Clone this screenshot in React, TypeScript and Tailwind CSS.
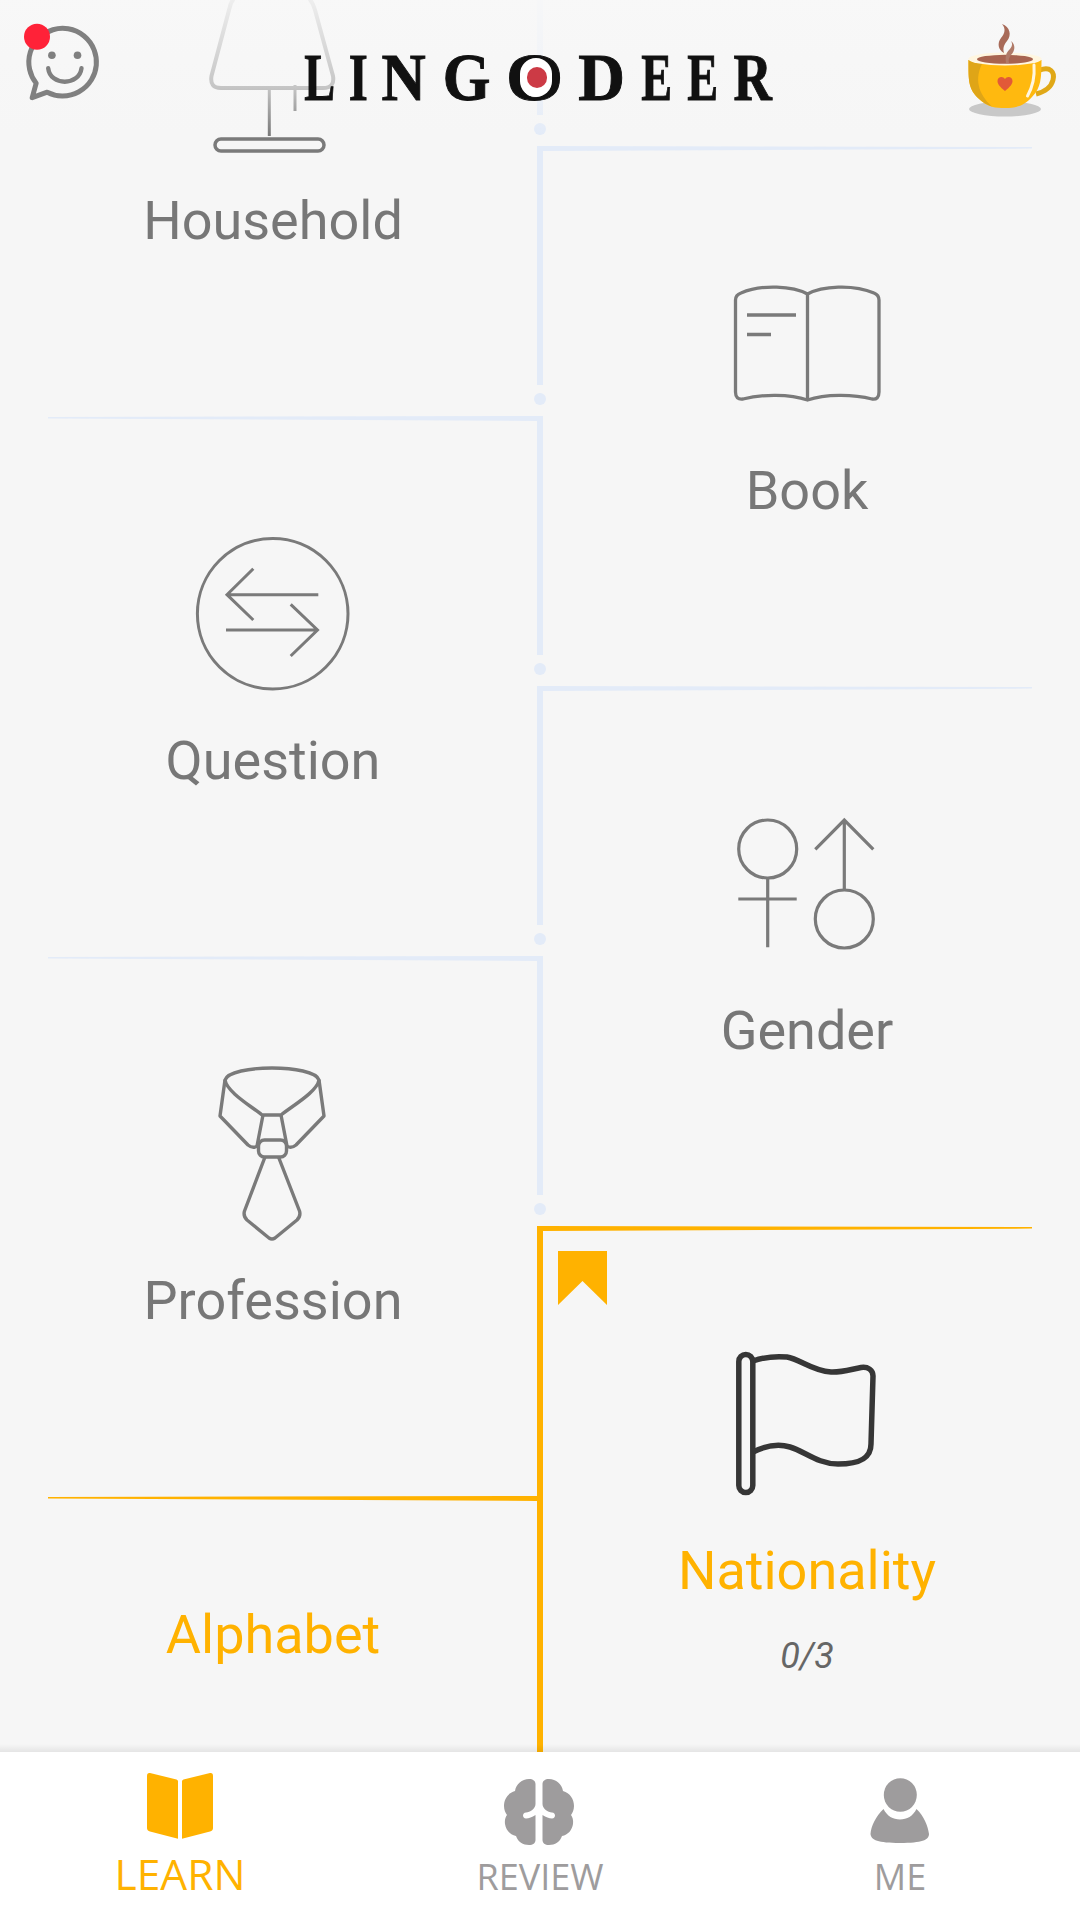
import type { ReactNode } from "react";

const roboto = "[font-family:Roboto,sans-serif]";

function Lamp() {
  return (
    <svg viewBox="193 -7 160 160" className="h-[160px] w-[160px]" fill="none" stroke="#7a7a7a">
      <path strokeWidth="4" d="M238 -5Q231 -1 229 10L211.5 76Q209.5 88 221 88H323Q335 88 333 76L315 10Q312 -1 304 -6" />
      <path strokeWidth="3" d="M269.3 88V136M295 85V111" />
      <rect x="215" y="139" width="109" height="12" rx="6" strokeWidth="3.5" />
    </svg>
  );
}

function BookIcon() {
  return (
    <svg viewBox="-3 3 240 160" className="h-[160px] w-[240px]" fill="none" stroke="#7a7a7a" strokeWidth="3.3">
      <path d="M117.5 34C103 26 72 24 51 33Q45.5 35 45.5 40V132Q45.5 140 53 139C72 134 100 134 117.5 140C135 134 163 134 182 139Q189 140 189 132V40Q189 35 184 33C163 24 132 26 117.5 34Z" />
      <path d="M117.5 34V140M57 55H106M57 74.5H81" />
    </svg>
  );
}

function QuestionIcon() {
  return (
    <svg viewBox="3 3 200 200" className="h-[200px] w-[200px]" fill="none" stroke="#7a7a7a" strokeWidth="3">
      <circle cx="102.7" cy="103.7" r="75.3" />
      <path d="M148.3 84.7H57M83.3 58.7L57 84.7L83.3 110M56 120H147.5M120.7 94.3L147.5 120L120.7 146" />
    </svg>
  );
}

function GenderIcon() {
  return (
    <svg viewBox="7 3 200 180" className="h-[180px] w-[200px]" fill="none" stroke="#7a7a7a" strokeWidth="3.2">
      <circle cx="67.7" cy="59" r="29" />
      <path d="M67.7 88V157.3M38.3 109H96.7" />
      <circle cx="144.3" cy="129" r="29" />
      <path d="M144.3 100V30M115.3 59.3L144.3 30L173.3 59.3" />
    </svg>
  );
}

function TieIcon() {
  return (
    <svg viewBox="-2 3 170 200" className="h-[200px] w-[170px]" fill="none" stroke="#7a7a7a" strokeWidth="3.4" strokeLinejoin="round">
      <path d="M35 30C40 14 124 14 129 30C127 42 102 56 91 65H72C61 56 37 42 35 30Z" />
      <path d="M35 30L30 66L58 95Q63 99 67 96L73 65M129 30L134 66L106 95Q101 99 97 96L91 65" />
      <rect x="68.5" y="90" width="28" height="17" rx="6" />
      <path d="M75 107L54.5 161Q53 166 57 170L79 188Q82 190 85 188L107 170Q111 166 109.5 161L88.5 107" />
    </svg>
  );
}

function FlagIcon() {
  return (
    <svg viewBox="207 143 160 160" className="h-[160px] w-[160px]" fill="none" stroke="#363636" strokeWidth="5.5">
      <rect x="218.8" y="154.5" width="14" height="138" rx="7" />
      <path d="M233 161C243 157.5 256 156 267 157C280 159 292 171 311 172C322 172.5 332 169 341 167.5C348 166.5 353 170 353 176L351 244C351 258 340 264 318 264C298 264 284 251 270 247C257 243 243 247 233 252" />
    </svg>
  );
}

function Rule({ side, active }: { side: "left" | "right"; active: boolean }) {
  const points = side === "left" ? "0,2.6 0,1 489,0 489,5" : "0,0 0,5 489,2.6 489,1";
  return (
    <svg
      viewBox="0 0 489 5"
      preserveAspectRatio="none"
      className={
        side === "left"
          ? "ml-[48px] block h-[5px] w-[489px] shrink-0"
          : "block h-[5px] w-[489px] shrink-0"
      }
    >
      <polygon points={points} fill={active ? "#ffb200" : "#e3ebf8"} />
    </svg>
  );
}

function Lesson({
  side,
  label,
  active = false,
  icon,
  progress,
}: {
  side: "left" | "right";
  label: string;
  active?: boolean;
  icon?: ReactNode;
  progress?: string;
}) {
  return (
    <section className="relative flex h-[540px] shrink-0 flex-col">
      <Rule side={side} active={active} />
      {active && icon && (
        <svg viewBox="0 0 49 54" className="absolute left-[15px] top-[25px] h-[54px] w-[49px]">
          <polygon points="0,0 49,0 49,54 24.5,30 0,54" fill="#ffb200" />
        </svg>
      )}
      <div className={side === "left" ? "flex flex-col items-center pl-[9px]" : "flex flex-col items-center pr-[9px]"}>
        {icon ? (
          <div className="flex h-[308px] items-center justify-center pt-[76px]">{icon}</div>
        ) : (
          <div className="h-[102px]" />
        )}
        <div className={`${roboto} text-[54px] leading-[64px] ${active ? "text-[#ffb200]" : "text-[#777777]"}`}>
          {label}
        </div>
        {progress && (
          <div className={`${roboto} mt-[31px] text-[36px] italic leading-[44px] text-[#666666]`}>{progress}</div>
        )}
      </div>
    </section>
  );
}

function Spine() {
  const segments = [0, 1, 2, 3, 4];
  return (
    <div className="-mt-[124px] flex flex-col items-center">
      {segments.map((n) => (
        <div key={n} className="flex h-[270px] w-[6px] shrink-0 flex-col items-center">
          <div className="h-[239px] w-[6px] bg-[#e3ebf8]" />
          <div className="mt-[8px] h-[12px] w-[12px] shrink-0 rounded-full bg-[#e3ebf8]" />
        </div>
      ))}
      <div className="w-[6px] flex-1 bg-[#ffb200]" />
    </div>
  );
}

const logoLetters = [
  { ch: "L", box: "w-[27px]", fit: "scale-x-[.68]" },
  { ch: "I", box: "w-[12px]", fit: "scale-x-[.72]" },
  { ch: "N", box: "w-[42px]", fit: "scale-x-[.9]" },
  { ch: "G", box: "w-[45px]", fit: "scale-x-[.9]" },
  { ch: "O", box: "w-[53px]", fit: "scale-x-[1.08]" },
  { ch: "D", box: "w-[44px]", fit: "scale-x-[.95]" },
  { ch: "E", box: "w-[27px]", fit: "scale-x-[.68]" },
  { ch: "E", box: "w-[27px]", fit: "scale-x-[.68]" },
  { ch: "R", box: "w-[35px]", fit: "scale-x-[.78]" },
];

function Logo() {
  return (
    <div className="ml-[6px] mt-[33px] flex h-[68px] gap-[19px] text-[68px] font-bold leading-[68px] text-[#111111] [-webkit-text-stroke:1px_#111111] [font-family:'Liberation_Serif',serif]">
      {logoLetters.map((l, i) => (
        <span key={i} className={`relative flex shrink-0 justify-center ${l.box}`}>
          <span className={`inline-block ${l.fit}`}>{l.ch}</span>
          {l.ch === "O" && (
            <>
              <span className="absolute left-[12px] top-[15px] h-[39px] w-[32px] rounded-full bg-white" />
              <span className="absolute left-[19px] top-[24px] h-[21px] w-[20px] rounded-full bg-[#cc3a45]" />
            </>
          )}
        </span>
      ))}
    </div>
  );
}

function Smiley() {
  return (
    <svg viewBox="0 10 120 100" className="h-[100px] w-[120px] shrink-0">
      <g transform="translate(1.2 1.2)">
        <path
          d="M46 91A33.8 33.8 0 1 0 35 82L31 96.5Z"
          fill="none"
          stroke="#808080"
          strokeWidth="5"
          strokeLinejoin="round"
        />
        <circle cx="50.7" cy="54" r="3.8" fill="#808080" />
        <circle cx="76.3" cy="54" r="3.8" fill="#808080" />
        <path d="M47 67C49 85 78 85 80.3 67" fill="none" stroke="#808080" strokeWidth="4.4" strokeLinecap="round" />
      </g>
      <circle cx="37" cy="36.7" r="13" fill="#ff2238" />
    </svg>
  );
}

function Cup() {
  return (
    <svg viewBox="0 0 120 120" className="mr-[10px] h-[120px] w-[120px] shrink-0">
      <ellipse cx="55" cy="99" rx="36" ry="7.5" fill="#c8c8c8" />
      <path d="M90 60C100 56 105 62 103 70C101 78 94 82 86 84" fill="none" stroke="#e0a817" strokeWidth="5" />
      <path d="M18.5 50C18.5 70 18 78 28 88C38 98 46 98 55 98C66 98 74 96 82 87C91 78 91.5 68 91.5 50Z" fill="#ffb90f" />
      <path d="M18.5 50C18.5 70 18 78 28 88C32 92 37 95 42 96.5C28 84 24 68 33 52Z" fill="#dfa517" />
      <ellipse cx="55" cy="49" rx="36.7" ry="6.5" fill="#fff6e0" />
      <ellipse cx="55" cy="49.3" rx="28" ry="4.5" fill="#a86450" />
      <path d="M52 14C60 17 62 25 57 31C53 36 53 39 54 43C48 40 47 33 51 28C55 23 56 19 52 14Z" fill="#a86a58" />
      <path d="M61 31C66 35 65 41 61 45C59 48 58 50 59 53H56C55 47 56 43 59 40C62 37 63 34 61 31Z" fill="#b07a68" />
      <path d="M55 81C50 77 47.5 74 47.5 71C47.5 66.5 53 65.5 55 69C57 65.5 62.5 66.5 62.5 71C62.5 74 60 77 55 81Z" fill="#e25a38" />
      <path d="M84 55C85 68 82 78 77.5 86" fill="none" stroke="#fff6e0" strokeWidth="3" strokeLinecap="round" />
    </svg>
  );
}

function Header() {
  return (
    <header className="absolute inset-x-0 top-0 flex h-[135px] justify-between bg-[linear-gradient(to_bottom,rgba(248,248,248,.92),rgba(247,247,247,.6)_65%,rgba(247,247,247,0)_100%)] pt-[10px]">
      <Smiley />
      <Logo />
      <Cup />
    </header>
  );
}

function LearnIcon() {
  return (
    <svg viewBox="50 8 80 80" className="h-[80px] w-[80px]" fill="#ffb200">
      <path d="M60 13L86.5 19.5Q88 20 88 21.5V78.7L60 71.5Q57 70.5 57 68V16Q57 12.5 60 13Z" />
      <path d="M120 13L93.5 19.5Q92 20 92 21.5V78.7L120 71.5Q123 70.5 123 68V16Q123 12.5 120 13Z" />
    </svg>
  );
}

const brainHalf =
  "M55.5 24C55.5 21 53 19 49 19C42 19 36 24 35 31C28 33 24 39 24 46C24 50 25.5 53 27 55C25.5 57 24.5 60 25 64C26 70 30 75 36 76C38 82 43 85 49 85C53 85 55.5 83 55.5 80V55C52 57 49 58.5 46 58.5C42 58.5 42 52.5 46 52.5C50 52 55.5 49 55.5 44Z";

function ReviewIcon() {
  return (
    <svg viewBox="20 8 80 80" className="h-[80px] w-[80px]" fill="#9e9c9d">
      <path d={brainHalf} />
      <path d={brainHalf} transform="translate(118 0) scale(-1 1)" />
    </svg>
  );
}

function MeIcon() {
  return (
    <svg viewBox="860 1768 80 80" className="h-[80px] w-[80px]" fill="#9e9c9d">
      <ellipse cx="900.3" cy="1795" rx="16.5" ry="16.8" />
      <path d="M883.5 1809C887 1816 893 1819.5 900 1819.5C907 1819.5 913 1816 916.5 1809C924 1816 928 1826 929 1834C929 1840 922 1843 900 1843C878 1843 871 1840 870.5 1834C871 1826 876 1816 883.5 1809Z" />
    </svg>
  );
}

function TabBar() {
  return (
    <nav className="grid h-[168px] shrink-0 grid-cols-3 bg-white pt-[16px] [font-family:'Open_Sans',sans-serif]">
      <div className="flex flex-col items-center">
        <LearnIcon />
        <span className="mt-[4px] text-[42.5px] leading-[44px] text-[#ffb200]">LEARN</span>
      </div>
      <div className="flex flex-col items-center">
        <ReviewIcon />
        <span className="mt-[7px] text-[36px] leading-[44px] text-[#9e9c9d]">REVIEW</span>
      </div>
      <div className="flex flex-col items-center">
        <MeIcon />
        <span className="mt-[7px] text-[36px] leading-[44px] text-[#9e9c9d]">ME</span>
      </div>
    </nav>
  );
}

export default function App() {
  return (
    <div className="flex h-[1920px] w-[1080px] flex-col overflow-hidden bg-[#f6f6f6]">
      <main className="relative grid min-h-0 flex-1 grid-cols-[537px_6px_537px] overflow-hidden">
        <div className="-mt-[124px] flex flex-col">
          <Lesson side="left" label="Household" icon={<Lamp />} />
          <Lesson side="left" label="Question" icon={<QuestionIcon />} />
          <Lesson side="left" label="Profession" icon={<TieIcon />} />
          <Lesson side="left" label="Alphabet" active />
        </div>
        <Spine />
        <div className="mt-[146px] flex flex-col">
          <Lesson side="right" label="Book" icon={<BookIcon />} />
          <Lesson side="right" label="Gender" icon={<GenderIcon />} />
          <Lesson side="right" label="Nationality" active icon={<FlagIcon />} progress="0/3" />
        </div>
        <Header />
        <div className="absolute inset-x-0 bottom-0 h-[8px] bg-gradient-to-b from-transparent to-black/[0.07]" />
      </main>
      <TabBar />
    </div>
  );
}
